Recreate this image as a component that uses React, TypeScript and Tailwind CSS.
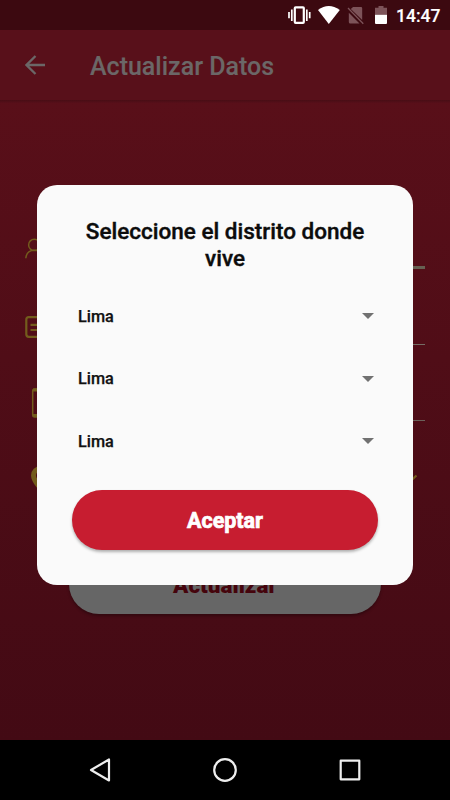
import React from "react";

function StatusBar() {
  return (
    <header className="flex h-[30px] shrink-0 items-center bg-[#3c0910] pl-[288px] text-white">
      <svg width="162" height="30" viewBox="288 0 162 30">
        <rect x="294.8" y="7.3" width="9" height="15.500" rx="0.8" fill="none" stroke="white" strokeWidth="2.2" />
        <path d="M291.8 9.5v11.4M306.8 9.5v11.4M289 12v6.3M309.7 12v6.3" stroke="white" strokeWidth="1.7" />
        <path d="M318 10Q328.700 1.800 339.800 10L328.800 24z" fill="white" />
        <path d="M353 7h8q1.200 0 1.200 1.200V20L350.800 9z" fill="#7d5359" />
        <path d="M348.800 12.800L359.500 23.400H350.300q-1.500 0-1.500-1.500z" fill="#7d5359" />
        <path d="M348 8L363.300 23.800" stroke="#7d5359" strokeWidth="1.300" />
        <path d="M378.500 6h5v1.800h3.500v7H375v-7h3.500z" fill="#7d5359" />
        <path d="M375 14.800h12V23q0 1-1 1h-10q-1 0-1-1z" fill="white" />
        <text x="396" y="22.300" fill="white" stroke="white" strokeWidth="0.15" fontSize="17.500" fontWeight="500" fontFamily="Roboto, sans-serif">14:47</text>
      </svg>
    </header>
  );
}

function Field({ icon, className, line }: { icon: React.ReactNode; className: string; line: string }) {
  return (
    <div className={"flex shrink-0 items-end justify-between pl-[25px] pr-[25px] " + className}>
      <div className="flex w-7 justify-center text-[#735c1c]">{icon}</div>
      <div className={"w-[355px] " + line} />
    </div>
  );
}

function Form() {
  return (
    <main className="flex h-[640px] flex-col bg-linear-to-b from-[#590f19] to-[#430a14]">
      <div className="h-[3px] shrink-0 bg-linear-to-b from-[#480d15] to-[#570f19]" />
      <Field
        className="mt-[132px] h-[34px]"
        line="h-[3px] bg-[#666052]"
        icon={
          <svg className="mb-[10px]" width="28" height="22" viewBox="25 237 28 22" fill="none" stroke="currentColor" strokeWidth="1.5">
            <circle cx="34.300" cy="244.900" r="5.700" />
            <path d="M25.800 258.200q.8-8 8.500-8 7.500 0 8.500 8" />
          </svg>
        }
      />
      <Field
        className="h-[76px]"
        line="h-px bg-[#756d65]"
        icon={
          <svg className="mb-[7.500px]" width="28" height="22" viewBox="25 315 28 22" fill="none" stroke="currentColor" strokeWidth="2.2">
            <rect x="26.300" y="316.200" width="25" height="19.600" rx="2.500" />
            <path d="M30.500 323.800h10M30.500 329h10" />
          </svg>
        }
      />
      <Field
        className="h-[76px]"
        line="h-px bg-[#6b6059]"
        icon={
          <svg className="mb-[3px]" width="28" height="30" viewBox="25 388 28 30" fill="none" stroke="currentColor">
            <rect x="32.700" y="389" width="16" height="28" rx="2" strokeWidth="1.500" />
            <path d="M33 390h15M33 415.500h15" strokeWidth="3" />
          </svg>
        }
      />
      <div className="mt-[44px] flex h-[30px] shrink-0 items-start justify-between px-[25px]">
        <svg width="28" height="30" viewBox="25 465 28 30" fill="#735c1c">
          <path fillRule="evenodd" d="M40.500 466a9.500 9.500 0 0 0-9.500 9.500c0 7 9.500 16 9.500 16s9.500-9 9.500-16a9.500 9.500 0 0 0-9.500-9.500zm0 5a4.500 4.500 0 1 1 0 9 4.500 4.500 0 0 1 0-9z" />
        </svg>
        <svg className="mr-2" width="16" height="24" viewBox="401 465 16 24" fill="none" stroke="#735c1c" strokeWidth="2.300">
          <path d="M402.500 475.500l7 6.500 7-6.500" />
        </svg>
      </div>
      <div className="mt-[58.500px] flex h-[60px] w-[312px] shrink-0 items-center justify-center self-center rounded-full bg-[#666] pt-[4px] font-[Roboto] text-[22.5px] font-black text-[#45040c] shadow-[0_2px_3px_rgba(0,0,0,0.3)]">
        Actualizar
      </div>
    </main>
  );
}

function Picker() {
  return (
    <div className="flex h-[62.5px] items-center justify-between pl-[6px] pr-[4px] text-[16.25px] font-medium text-[#111]">
      <span className="pt-[1.5px] [-webkit-text-stroke:0.25px]">Lima</span>
      <svg width="12" height="6" viewBox="0 0 12 6" fill="#717171"><path d="M0 0h12L6 6z" /></svg>
    </div>
  );
}

export default function App() {
  return (
    <div className="relative flex h-[800px] w-[450px] flex-col overflow-hidden bg-black font-[Roboto,sans-serif]">
      <StatusBar />
      <div className="flex h-[70px] shrink-0 items-center bg-[#58101a] pl-[25px] text-[#6b6767]">
        <svg width="20" height="20" viewBox="0 0 20 20" fill="none" stroke="currentColor" strokeWidth="2.300">
          <path d="M20 10H2M10.500 1L1.500 10l9 9" />
        </svg>
        <h1 className="ml-[45px] mt-[4px] text-[25px] font-medium [-webkit-text-stroke:0.15px]">Actualizar Datos</h1>
      </div>
      <Form />
      <nav className="flex h-[60px] shrink-0 items-center justify-center">
        <svg width="280" height="30" viewBox="85 755 280 30" fill="none" stroke="#eee" strokeWidth="2.200" strokeLinejoin="round">
          <path d="M109 759.500v21L91 770z" />
          <circle cx="225" cy="770" r="10.800" />
          <rect x="340.700" y="760.700" width="18.600" height="18.600" />
        </svg>
      </nav>
      <section role="dialog" className="absolute left-[37px] top-[185px] flex h-[399.500px] w-[376px] flex-col rounded-[20px] bg-[#fafafa] px-[35px] pt-[33px]">
        <h2 className="text-center text-[22.500px] font-medium leading-[26.500px] text-[#0c0c0c] [-webkit-text-stroke:0.4px]">
          Seleccione el distrito donde
          <br />
          vive
        </h2>
        <div className="mt-[14px]">
          <Picker />
          <Picker />
          <Picker />
        </div>
        <button className="mt-[17px] h-[60px] shrink-0 rounded-full bg-[#c71d30] pt-[3px] text-[21.500px] font-bold text-white shadow-[0_2px_3px_rgba(0,0,0,0.3)] [-webkit-text-stroke:0.7px]">
          Aceptar
        </button>
      </section>
    </div>
  );
}
